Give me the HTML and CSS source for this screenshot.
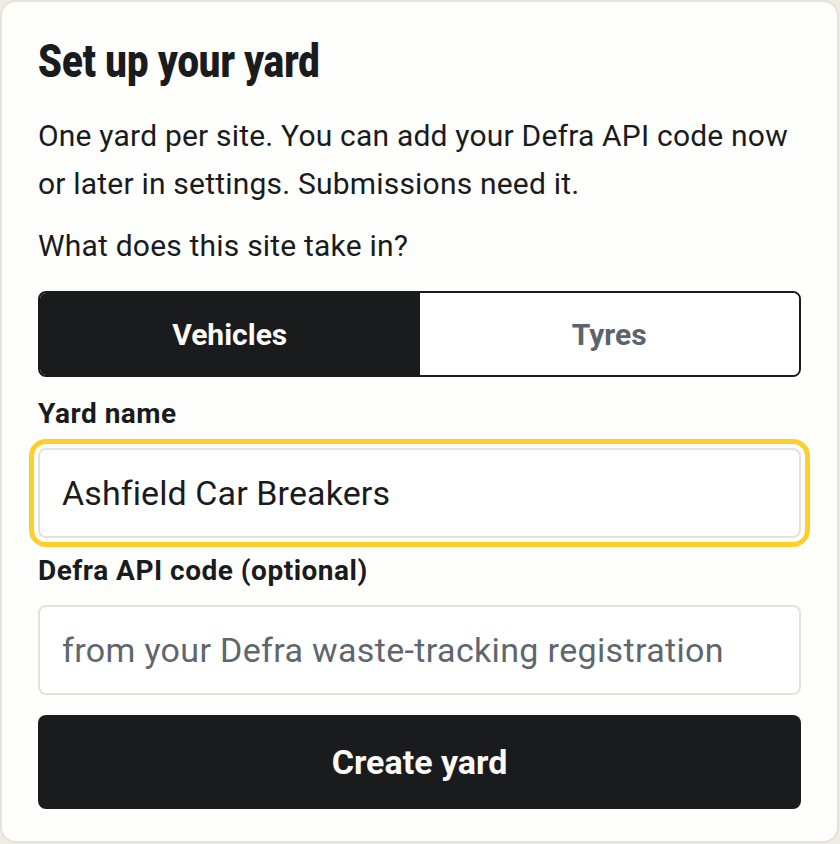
FILE: index.html
```html
<!DOCTYPE html>
<html lang="en">
<head>
<meta charset="utf-8">
<title>Set up your yard</title>
<link rel="stylesheet" href="styles.css">
</head>
<body>
<main class="card">
  <h1 class="title"><span class="title-text">Set up your yard</span></h1>
  <p class="intro">One yard per site. You can add your Defra API code now or later in settings. Submissions need it.</p>
  <p class="question">What does this site take in?</p>
  <div class="seg">
    <button class="seg-btn active" type="button">Vehicles</button>
    <button class="seg-btn" type="button">Tyres</button>
  </div>
  <label class="field-label" for="yard">Yard name</label>
  <input class="field focus" id="yard" type="text" value="Ashfield Car Breakers">
  <label class="field-label second" for="defra">Defra API code (optional)</label>
  <input class="field" id="defra" type="text" placeholder="from your Defra waste-tracking registration">
  <button class="primary" type="button">Create yard</button>
</main>
</body>
</html>
```

FILE: styles.css
```css
* { box-sizing: border-box; }
html, body { margin: 0; padding: 0; }
body {
  background: #efece4;
  font-family: Roboto, "Liberation Sans", sans-serif;
  color: #1a1b1d;
  width: 840px;
  height: 844px;
}
.card {
  width: 839px;
  background: #fefefc;
  border: 2px solid #e6e2d9;
  border-radius: 16px;
  padding: 34px 36px 32px;
  display: flex;
  flex-direction: column;
}
.title {
  margin: 0;
  height: 52px;
  font-family: Roboto, "Liberation Sans", sans-serif;
  font-weight: 900;
  font-size: 46px;
  line-height: 50px;
  white-space: nowrap;
}
.title-text {
  display: inline-block;
  transform: scaleX(0.83);
  transform-origin: left center;
}
.intro {
  margin: 24px 0 0;
  font-size: 30px;
  line-height: 48px;
  letter-spacing: 0.2px;
}
.question {
  margin: 14px 0 0;
  font-size: 30px;
  line-height: 48px;
  letter-spacing: 0.2px;
}
.seg {
  margin-top: 21px;
  height: 86px;
  border: 2px solid #1a1b1d;
  border-radius: 8px;
  display: grid;
  grid-template-columns: 1fr 1fr;
  overflow: hidden;
}
.seg-btn {
  border: 0;
  background: #ffffff;
  font-family: Roboto, "Liberation Sans", sans-serif;
  font-weight: 700;
  font-size: 30px;
  color: #5c636b;
}
.seg-btn.active {
  background: #1a1b1d;
  color: #fbfaf7;
}
.field-label {
  margin-top: 20px;
  font-weight: 700;
  font-size: 28px;
  line-height: 34px;
  letter-spacing: 0.5px;
}
.field-label.second { margin-top: 16px; }
.field {
  margin-top: 17px;
  height: 90px;
  border: 2px solid #e6e2d9;
  border-radius: 8px;
  background: #ffffff;
  padding: 0 22px;
  font-family: Roboto, "Liberation Sans", sans-serif;
  font-size: 34px;
  letter-spacing: 0.1px;
  color: #1a1b1d;
}
.field::placeholder {
  color: #5f666e;
  letter-spacing: 0.35px;
}
.field.focus {
  outline: 5px solid #fdcf2a;
  outline-offset: 4px;
}
.primary {
  margin-top: 20px;
  height: 94px;
  border: 0;
  border-radius: 8px;
  background: #1a1b1d;
  color: #fbfaf7;
  font-family: Roboto, "Liberation Sans", sans-serif;
  font-weight: 700;
  font-size: 34px;
}
```
